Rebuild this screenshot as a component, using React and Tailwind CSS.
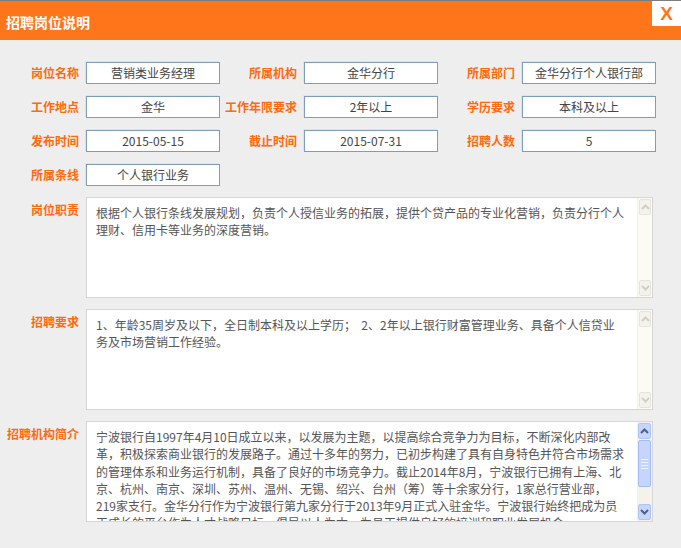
import React from 'react';

const fields = [
  [
    ['岗位名称', '营销类业务经理'],
    ['所属机构', '金华分行'],
    ['所属部门', '金华分行个人银行部'],
  ],
  [
    ['工作地点', '金华'],
    ['工作年限要求', '2年以上'],
    ['学历要求', '本科及以上'],
  ],
  [
    ['发布时间', '2015-05-15'],
    ['截止时间', '2015-07-31'],
    ['招聘人数', '5'],
  ],
  [['所属条线', '个人银行业务']],
];

const sections = [
  {
    label: '岗位职责',
    active: false,
    lines: [
      '根据个人银行条线发展规划，负责个人授信业务的拓展，提供个贷产品的专业化营销，负责分行个人',
      '理财、信用卡等业务的深度营销。',
    ],
  },
  {
    label: '招聘要求',
    active: false,
    lines: [
      '1、年龄35周岁及以下，全日制本科及以上学历；  2、2年以上银行财富管理业务、具备个人信贷业',
      '务及市场营销工作经验。',
    ],
  },
  {
    label: '招聘机构简介',
    active: true,
    lines: [
      '宁波银行自1997年4月10日成立以来，以发展为主题，以提高综合竞争力为目标，不断深化内部改',
      '革，积极探索商业银行的发展路子。通过十多年的努力，已初步构建了具有自身特色并符合市场需求',
      '的管理体系和业务运行机制，具备了良好的市场竞争力。截止2014年8月，宁波银行已拥有上海、北',
      '京、杭州、南京、深圳、苏州、温州、无锡、绍兴、台州（筹）等十余家分行，1家总行营业部，',
      '219家支行。金华分行作为宁波银行第九家分行于2013年9月正式入驻金华。宁波银行始终把成为员',
      '工成长的平台作为人才战略目标，倡导以人为本，为员工提供良好的培训和职业发展机会。',
    ],
  },
];

function Chevron({ up, color }) {
  return (
    <svg width="9" height="6" viewBox="0 0 9 6">
      <polyline
        points={up ? '1,5 4.5,1.5 8,5' : '1,1 4.5,4.5 8,1'}
        fill="none"
        stroke={color}
        strokeWidth="2"
      />
    </svg>
  );
}

function ScrollBar({ active }) {
  if (!active) {
    return (
      <div className="w-[15px] flex flex-col bg-[#fbfbf4] border-l border-[#f0f0e8]">
        <div className="h-[16px] mt-[1px] mx-[1px] rounded-[2px] bg-[#f3f3ec] border border-[#e4e4dc] flex items-center justify-center">
          <Chevron up color="#cfcfc8" />
        </div>
        <div className="flex-1" />
        <div className="h-[16px] mb-[1px] mx-[1px] rounded-[2px] bg-[#f3f3ec] border border-[#e4e4dc] flex items-center justify-center">
          <Chevron color="#cfcfc8" />
        </div>
      </div>
    );
  }
  return (
    <div className="w-[15px] flex flex-col bg-[#f4f2ea]">
      <div className="h-[16px] mt-[1px] mx-[1px] rounded-[2px] bg-[#c5d5fc] border border-[#b0c4f4] flex items-center justify-center">
        <Chevron up color="#4d6185" />
      </div>
      <div className="h-[47px] mt-[1px] mx-[1px] rounded-[2px] bg-[#c6d5fc] border border-[#a5bbf3] flex flex-col items-center justify-center gap-[2px]">
        <div className="w-[7px] h-px bg-[#eef3ff]" />
        <div className="w-[7px] h-px bg-[#eef3ff]" />
        <div className="w-[7px] h-px bg-[#eef3ff]" />
        <div className="w-[7px] h-px bg-[#eef3ff]" />
      </div>
      <div className="flex-1" />
      <div className="h-[16px] mb-[1px] mx-[1px] rounded-[2px] bg-[#c5d5fc] border border-[#b0c4f4] flex items-center justify-center">
        <Chevron color="#4d6185" />
      </div>
    </div>
  );
}

export default function App() {
  return (
    <div className="w-[681px] h-[548px] bg-[#eeeeee] font-['Noto_Sans_CJK_SC',sans-serif] overflow-hidden">
      {/* Header */}
      <div className="h-px bg-[#7d7d7d]" />
      <div className="h-[39px] bg-[#ff761a] flex items-start justify-between">
        <div className="pl-[6px] pt-[11px] text-[14px] leading-[20px] font-bold text-white">
          招聘岗位说明
        </div>
        <div className="w-[29px] h-[25px] bg-white flex items-center justify-center text-[#ff761a] text-[19px] font-bold font-['Liberation_Sans',sans-serif] leading-none">
          X
        </div>
      </div>

      {/* Fields */}
      <div className="pt-[22px] flex flex-col gap-[12px]">
        {fields.map((row, i) => (
          <div key={i} className="flex items-center">
            {row.map(([label, value], j) => (
              <div key={label} className="flex items-center">
                <div
                  className={`${j === 0 ? 'w-[79px]' : 'w-[77px]'} text-right text-[12px] font-bold text-[#ff6a0c] whitespace-nowrap`}
                >
                  {label}
                </div>
                <div className="ml-[7px] w-[134px] h-[22px] bg-white border border-[#7f9db9] shadow-[-1px_-1px_0_#e2e2e2] flex items-center justify-center text-[12px] text-[#444]">
                  {value}
                </div>
              </div>
            ))}
          </div>
        ))}
      </div>

      {/* Text areas */}
      <div className="pt-[11px] flex flex-col gap-[11px]">
        {sections.map((s) => (
          <div key={s.label} className="flex items-start">
            <div className="w-[79px] pt-[4px] text-right text-[12px] font-bold text-[#ff6a0c] whitespace-nowrap">
              {s.label}
            </div>
            <div className="ml-[7px] w-[567px] h-[101px] bg-white border border-[#d6d6d6] flex">
              <div className="flex-1 overflow-hidden pl-[9px] pt-[6px] text-[12px] leading-[17.3px] text-[#555]">
                {s.lines.map((l, k) => (
                  <div key={k} className="whitespace-pre">
                    {l}
                  </div>
                ))}
              </div>
              <ScrollBar active={s.active} />
            </div>
          </div>
        ))}
      </div>
    </div>
  );
}
